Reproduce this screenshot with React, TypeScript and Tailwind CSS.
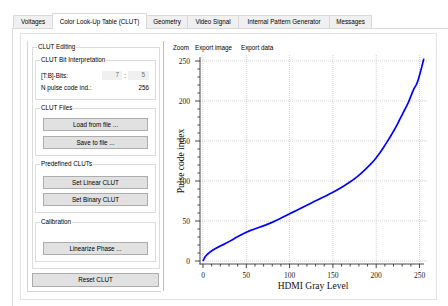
import React from "react";

const tabs = [
  { t: "Voltages", w: 40 },
  { t: "Color Look-Up Table (CLUT)", w: 95, on: true },
  { t: "Geometry", w: 42 },
  { t: "Video Signal", w: 52 },
  { t: "Internal Pattern Generator", w: 92 },
  { t: "Messages", w: 43 },
];

const X = (v: number) => 203 + v * 0.866;
const Y = (v: number) => 261 - v * 0.8;

// control points read off the curve (gray level -> pulse code)
const pts: [number, number][] = [
  [0, 0], [3, 6], [8, 11], [15, 16], [28, 23], [50, 36], [77, 47], [100, 59],
  [124, 72], [150, 86], [170, 99], [185, 112], [200, 129], [212, 148], [222, 166],
  [230, 183], [237, 198], [243, 214], [247, 222], [251, 236], [255, 253],
];

function curve() {
  const out: string[] = [];
  for (let i = 0; i < pts.length - 1; i++) {
    const p0 = pts[Math.max(0, i - 1)], p1 = pts[i], p2 = pts[i + 1], p3 = pts[Math.min(pts.length - 1, i + 2)];
    for (let s = 0; s < 6; s++) {
      const t = s / 6, t2 = t * t, t3 = t2 * t;
      const f = (a: number, b: number, c: number, d: number) =>
        0.5 * (2 * b + (-a + c) * t + (2 * a - 5 * b + 4 * c - d) * t2 + (-a + 3 * b - 3 * c + d) * t3);
      out.push(`${X(f(p0[0], p1[0], p2[0], p3[0])).toFixed(2)},${Y(f(p0[1], p1[1], p2[1], p3[1])).toFixed(2)}`);
    }
  }
  out.push(`${X(255)},${Y(253)}`);
  return out.join(" ");
}

function Group({ title, className, children }: { title: string; className: string; children?: React.ReactNode }) {
  return (
    <div className={"relative border border-[#dcdcdc] " + className}>
      <span className="absolute left-[4px] top-[-5px] bg-white px-[1px] leading-[8px]">{title}</span>
      {children}
    </div>
  );
}

function Btn({ label, className }: { label: string; className: string }) {
  return (
    <div className={"flex h-[13px] items-center justify-center border border-[#adadad] bg-[#e1e1e1] " + className}>
      {label}
    </div>
  );
}

function Chart() {
  const minor = Array.from({ length: 26 }, (_, i) => i * 10);
  const major = [0, 50, 100, 150, 200, 250];
  return (
    <svg width="272" height="250" viewBox="164 41 272 250" className="block">
      <g fontFamily="'Liberation Sans', Arial, sans-serif" fontSize="6.3" fill="#000">
        <text x="173" y="50">Zoom</text>
        <text x="195" y="50">Export image</text>
        <text x="241" y="50">Export data</text>
      </g>
      <g stroke="#c4c4c4" strokeWidth="0.8" strokeDasharray="1 1">
        {major.map((v) => (
          <line key={"v" + v} x1={X(v)} y1={55} x2={X(v)} y2={264} />
        ))}
        {major.map((v) => (
          <line key={"h" + v} x1={200} y1={Y(v)} x2={428} y2={Y(v)} />
        ))}
      </g>
      <g stroke="#333" strokeWidth="0.9">
        <line x1="200" y1="57" x2="200" y2="264.5" />
        <line x1="199.5" y1="264" x2="424" y2="264" />
        {minor.map((v) => (
          <line key={"ty" + v} x1={v % 50 ? 197.5 : 195} y1={Y(v)} x2={200} y2={Y(v)} />
        ))}
        {minor.map((v) => (
          <line key={"tx" + v} x1={X(v)} y1={264} x2={X(v)} y2={v % 50 ? 266.5 : 268} />
        ))}
      </g>
      <g fontFamily="'Liberation Serif', 'Times New Roman', serif" fontSize="7.5" fill="#222">
        {major.map((v) => (
          <text key={"ly" + v} x={190} y={Y(v) + 2.6} textAnchor="end">{v}</text>
        ))}
        {major.map((v) => (
          <text key={"lx" + v} x={X(v)} y={278} textAnchor="middle">{v}</text>
        ))}
      </g>
      <g fontFamily="'Liberation Serif', 'Times New Roman', serif" fontSize="9.5" fill="#111">
        <text x="313" y="289" textAnchor="middle">HDMI Gray Level</text>
        <text transform="translate(184 161) rotate(-90)" textAnchor="middle">Pulse code index</text>
      </g>
      <polyline points={curve()} fill="none" stroke="#0000ff" strokeWidth="1.7" strokeLinejoin="round" />
    </svg>
  );
}

export default function App() {
  return (
    <div className="h-[306px] w-[448px] overflow-hidden bg-white font-['Liberation_Sans',Arial,sans-serif] text-[6.3px] leading-[8px] text-black">
      <div className="ml-[13px] mt-[13px] flex h-[15px] items-end">
        {tabs.map((t, i) => (
          <div
            key={t.t}
            style={{ width: t.w }}
            className={
              "relative flex items-center justify-center border border-b-0 border-[#d9d9d9] " +
              (i ? "-ml-px " : "") +
              (t.on ? "z-10 mb-[-1px] h-[16px] bg-white" : "h-[13px] bg-[#f0f0f0]")
            }
          >
            {t.t}
          </div>
        ))}
      </div>
      <div className="ml-[12px] h-[300px] border-l border-t border-[#d9d9d9] pl-[7px] pt-[4px]">
        <div className="flex h-[267px] w-[417px] border border-[#e3e3e3]">
          <div className="ml-[6px] mt-[7px] h-[251px] w-[134px] border-b border-l border-[#d4d4d4]">
            <Group title="CLUT Editing" className="ml-[4px] mt-[6px] h-[222px] w-[128px] pl-[2px] pt-[12px]">
              <Group title="CLUT Bit Interpretation" className="h-[40px] w-[121px] pl-[5px] pt-[10px]">
                <div className="flex h-[9px] items-center">
                  <span className="w-[61px]">[T:B]-Bits:</span>
                  <span className="h-[9px] w-[20px] bg-[#f0f0f0] pr-[3px] text-right text-[#707070]">7</span>
                  <span className="w-[6px] text-center">:</span>
                  <span className="h-[9px] w-[21px] bg-[#f0f0f0] pr-[4px] text-right text-[#707070]">5</span>
                </div>
                <div className="mt-[4px] flex w-[108px] justify-between">
                  <span>N pulse code ind.:</span>
                  <span>256</span>
                </div>
              </Group>
              <Group title="CLUT Files" className="mt-[8px] h-[48px] w-[121px] pl-[7px] pt-[9px]">
                <Btn label="Load from file ..." className="w-[105px]" />
                <Btn label="Save to file ..." className="mt-[5px] w-[105px]" />
              </Group>
              <Group title="Predefined CLUTs" className="mt-[8px] h-[49px] w-[121px] pl-[7px] pt-[11px]">
                <Btn label="Set Linear CLUT" className="w-[105px]" />
                <Btn label="Set Binary CLUT" className="mt-[4px] w-[105px]" />
              </Group>
              <Group title="Calibration" className="mt-[9px] h-[40px] w-[121px] pl-[7px] pt-[19px]">
                <Btn label="Linearize Phase ..." className="w-[105px]" />
              </Group>
            </Group>
            <Btn label="Reset CLUT" className="ml-[4px] mt-[4px] h-[14px] w-[127px]" />
          </div>
          <div className="ml-[2px] mt-[7px] h-[250px] border-l border-[#bdbdbd]">
            <Chart />
          </div>
        </div>
      </div>
    </div>
  );
}
